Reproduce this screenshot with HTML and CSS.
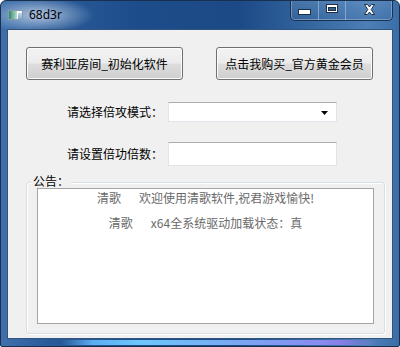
FILE: index.html
```html
<!DOCTYPE html>
<html>
<head>
<meta charset="utf-8">
<link rel="stylesheet" href="styles.css">
</head>
<body>
<div class="window">
  <div class="titlebar">
    <svg class="app-icon" width="15" height="10" viewBox="0 0 15 10">
      <defs>
        <linearGradient id="g1" x1="0" y1="0" x2="1" y2="0">
          <stop offset="0" stop-color="#2f8a6a"/>
          <stop offset="1" stop-color="#b9dcd0"/>
        </linearGradient>
        <linearGradient id="g2" x1="0" y1="0" x2="0" y2="1">
          <stop offset="0" stop-color="#d9e8f6"/>
          <stop offset="1" stop-color="#7fa6cf"/>
        </linearGradient>
      </defs>
      <rect x="0.5" y="0.5" width="14" height="9" fill="#ffffff" stroke="#8a9aa8"/>
      <rect x="1" y="1" width="8" height="8" fill="url(#g1)"/>
      <rect x="10" y="1" width="4" height="8" fill="url(#g2)"/>
      <rect x="10" y="1" width="4" height="2" fill="#f2f6fa"/>
    </svg>
    <span class="title">68d3r</span>
    <div class="caption">
      <div class="cbtn cmin">
        <svg width="13" height="6" viewBox="0 0 13 6"><rect x="0.5" y="0.5" width="12" height="5" fill="#ffffff" stroke="#1e2f45"/></svg>
      </div>
      <div class="cbtn cmax">
        <svg width="12" height="9" viewBox="0 0 12 9"><rect x="0.5" y="0.5" width="11" height="8" fill="#ffffff" stroke="#1e2f45"/><rect x="2.5" y="3.5" width="7" height="3" fill="#3a5f8c" stroke="#1e2f45"/></svg>
      </div>
      <div class="cbtn cclose">
        <svg width="13" height="11" viewBox="0 0 13 11"><path d="M1.5 0.5 H4.5 L6.5 3 L8.5 0.5 H11.5 L8.2 5.5 L11.5 10.5 H8.5 L6.5 8 L4.5 10.5 H1.5 L4.8 5.5 Z" fill="#ffffff" stroke="#1e2f45" stroke-linejoin="round"/></svg>
      </div>
    </div>
  </div>
  <div class="client">
    <div class="btn-row">
      <button class="btn">赛利亚房间_初始化软件</button>
      <button class="btn">点击我购买_官方黄金会员</button>
    </div>
    <div class="field-row combo-row">
      <span class="label">请选择倍攻模式：</span>
      <div class="combo">
        <svg class="arrow" width="7" height="4" viewBox="0 0 7 4"><path d="M0 0 H7 L3.5 4 Z" fill="#000"/></svg>
      </div>
    </div>
    <div class="field-row edit-row">
      <span class="label">请设置倍功倍数：</span>
      <div class="edit"></div>
    </div>
    <div class="group">
      <span class="group-title">公告：</span>
      <div class="textedit">
        <div class="line">清歌<span class="gap"></span>欢迎使用清歌软件,祝君游戏愉快!</div>
        <div class="line">清歌<span class="gap"></span>x64全系统驱动加载状态：真</div>
      </div>
    </div>
  </div>
</div>
</body>
</html>
```

FILE: styles.css
```css
* { box-sizing: border-box; }
html, body { margin: 0; padding: 0; background: #ffffff; }
body { width: 400px; height: 347px; overflow: hidden; font-family: "Noto Sans CJK SC", "Noto Sans", sans-serif; font-size: 12px; }

.window {
  width: 400px;
  height: 347px;
  border: 1px solid #17304f;
  border-radius: 6px 6px 2px 2px;
  padding: 0 6px 7px 6px;
  display: flex;
  flex-direction: column;
  background:
    radial-gradient(ellipse 55px 18px at 38px 14px, rgba(220,232,246,0.75), rgba(220,232,246,0) 100%),
    linear-gradient(to bottom, rgba(255,255,255,0) 0, rgba(255,255,255,0) 337px, rgba(255,255,255,0) 338px),
    linear-gradient(to right, #3f6fab 0%, #2a5b99 12%, #1d4c8a 35%, #1c4a87 60%, #35679f 78%, #4d7fb7 92%, #3b6da8 100%);
  position: relative;
  overflow: hidden;
}
.window::after {
  content: "";
  position: absolute;
  left: 60px;
  right: 20px;
  bottom: 1px;
  height: 5px;
  background: linear-gradient(to right, rgba(90,170,240,0) 0%, #5aaef0 10%, #6ec6fb 25%, #79a8f0 55%, #8a8af0 82%, #8a7fe6 88%, rgba(40,80,140,0) 100%);
}

.titlebar {
  height: 28px;
  display: flex;
  align-items: flex-start;
}
.app-icon { margin: 9px 0 0 1px; flex: none; }
.title {
  margin: 6px 0 0 6px;
  font-family: "Noto Sans", "Liberation Sans", sans-serif;
  font-size: 12px;
  line-height: 16px;
  color: #000;
}
.caption {
  margin-left: auto;
  margin-top: -1px;
  height: 21px;
  display: flex;
  border: 1px solid #1b3150;
  border-top: none;
  border-radius: 0 0 5px 5px;
  box-shadow: inset 0 0 0 1px rgba(200,220,240,0.45);
  overflow: hidden;
}
.cbtn {
  display: flex;
  align-items: center;
  justify-content: center;
  height: 100%;
  padding-bottom: 2px;
  background: linear-gradient(to bottom, rgba(120,160,205,0.35), rgba(60,100,150,0.15));
}
.cmin { width: 28px; border-right: 1px solid rgba(180,205,235,0.55); padding-top: 6px; }
.cmax { width: 27px; border-right: 1px solid rgba(180,205,235,0.55); }
.cmax svg { margin-top: -1px; }
.cclose { width: 46px; }

.client {
  flex: 1;
  background: #f0f0f0;
  border: 1px solid #31557f;
  display: flex;
  flex-direction: column;
}

.btn-row {
  display: flex;
  gap: 33px;
  margin: 17px 0 0 18px;
}
.btn {
  width: 157px;
  height: 33px;
  padding: 0;
  border: 1px solid #707070;
  border-radius: 3px;
  background: linear-gradient(to bottom, #f3f3f3 0%, #ebebeb 48%, #dddddd 52%, #cfcfcf 100%);
  box-shadow: inset 0 0 0 1px #fbfbfb;
  font-family: "Noto Sans CJK SC", sans-serif;
  font-size: 12px;
  color: #000;
  line-height: 16px;
}

.field-row {
  display: flex;
  align-items: center;
  margin-left: 59px;
}
.combo-row { margin-top: 22px; }
.edit-row { margin-top: 20px; }
.label {
  width: 101px;
  color: #000;
  line-height: 16px;
}
.combo {
  width: 169px;
  height: 20px;
  background: #fff;
  border: 1px solid #e2e3ea;
  border-top-color: #abadb3;
  display: flex;
  align-items: center;
  justify-content: flex-end;
  padding-right: 8px;
}
.arrow { margin-top: 1px; }
.edit {
  width: 169px;
  height: 24px;
  background: #fff;
  border: 1px solid #e2e3ea;
  border-top-color: #abadb3;
}

.group {
  margin: 16px 7px 0 18px;
  height: 152px;
  border: 1px solid #d5dfe5;
  border-radius: 3px;
  box-shadow: inset 1px 1px 0 #ffffff, 1px 1px 0 #ffffff;
  display: flex;
  flex-direction: column;
  align-items: flex-start;
}
.group-title {
  margin: -9px 0 0 4px;
  padding: 0 2px;
  background: #f0f0f0;
  line-height: 14px;
  color: #000;
}
.textedit {
  align-self: stretch;
  margin: 0 10px 0 10px;
  height: 136px;
  background: #fff;
  border: 1px solid #a5a5a5;
  padding-top: 1px;
  display: flex;
  flex-direction: column;
  gap: 9px;
}
.line {
  text-align: center;
  line-height: 16px;
  color: #6a6a6a;
}
.gap { display: inline-block; width: 18px; }
```
